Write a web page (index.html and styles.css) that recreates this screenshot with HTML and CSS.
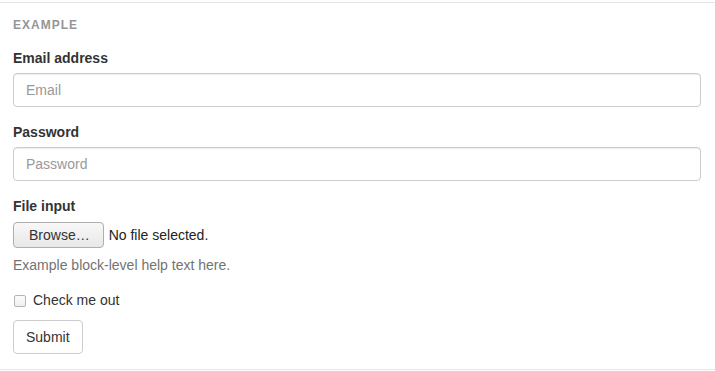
FILE: index.html
```html
<!DOCTYPE html>
<html>
<head>
<meta charset="utf-8">
<link rel="stylesheet" href="styles.css">
</head>
<body>
<div class="example">
  <div class="example-tag">Example</div>
  <form class="form">
    <div class="form-group">
      <label class="label">Email address</label>
      <input class="form-control" type="email" placeholder="Email">
    </div>
    <div class="form-group">
      <label class="label">Password</label>
      <input class="form-control" type="password" placeholder="Password">
    </div>
    <div class="form-group">
      <label class="label">File input</label>
      <div class="file-input">
        <span class="browse-btn">Browse…</span>
        <span class="file-name">No file selected.</span>
      </div>
      <p class="help-block">Example block-level help text here.</p>
    </div>
    <div class="checkbox">
      <label class="checkbox-label"><span class="check-box"></span>Check me out</label>
    </div>
    <button type="button" class="btn">Submit</button>
  </form>
</div>
</body>
</html>
```
FILE: styles.css
```css
* { box-sizing: border-box; }
html, body {
  margin: 0;
  padding: 0;
  background: #fff;
}
body {
  padding-top: 2px;
  font-family: "Liberation Sans", Arial, sans-serif;
  font-size: 14px;
  line-height: 20px;
  color: #333;
}
.example {
  border-top: 1px solid #e5e5e5;
  border-bottom: 1px solid #e7e7e7;
  padding: 14px 14px 15px 13px;
}
.example-tag {
  font-size: 12px;
  line-height: 17px;
  font-weight: 700;
  color: #959595;
  text-transform: uppercase;
  letter-spacing: 1px;
  margin-bottom: 14px;
}
.form { margin: 0; }
.form-group { margin-bottom: 15px; }
.label {
  display: block;
  font-weight: 700;
  margin-bottom: 5px;
}
.form-control {
  display: block;
  width: 100%;
  height: 34px;
  padding: 6px 12px;
  font-family: inherit;
  font-size: 14px;
  line-height: 20px;
  color: #555;
  background: #fff;
  border: 1px solid #ccc;
  border-radius: 4px;
  box-shadow: inset 0 1px 1px rgba(0,0,0,.075);
  margin: 0;
  outline: none;
}
.form-control::placeholder { color: #999; opacity: 1; }
.file-input {
  display: flex;
  align-items: center;
  height: 29px;
  padding-bottom: 1px;
  gap: 5px;
}
.browse-btn {
  display: inline-flex;
  align-items: center;
  height: 26px;
  padding: 0 13px 0 15px;
  border: 1px solid #aeaeae;
  border-radius: 4px;
  background: linear-gradient(#f8f8f8, #e8e8e8);
  color: #333;
  font-size: 14px;
}
.file-name { color: #222; }
.help-block {
  margin: 5px 0 10px;
  color: #737373;
}
.checkbox {
  margin: 10px 0 10px;
}
.checkbox-label {
  display: flex;
  align-items: center;
  height: 20px;
  font-weight: 400;
}
.check-box {
  width: 12px;
  height: 12px;
  margin: 1px 7px 0 1px;
  border: 1px solid #b4b4b4;
  border-radius: 2px;
  background: linear-gradient(#fcfcfc, #f0f0f0);
}
.btn {
  display: block;
  height: 34px;
  padding: 6px 12px;
  font-family: inherit;
  font-size: 14px;
  line-height: 20px;
  color: #333;
  background: #fff;
  border: 1px solid #ccc;
  border-radius: 4px;
  margin: 0;
}
```
